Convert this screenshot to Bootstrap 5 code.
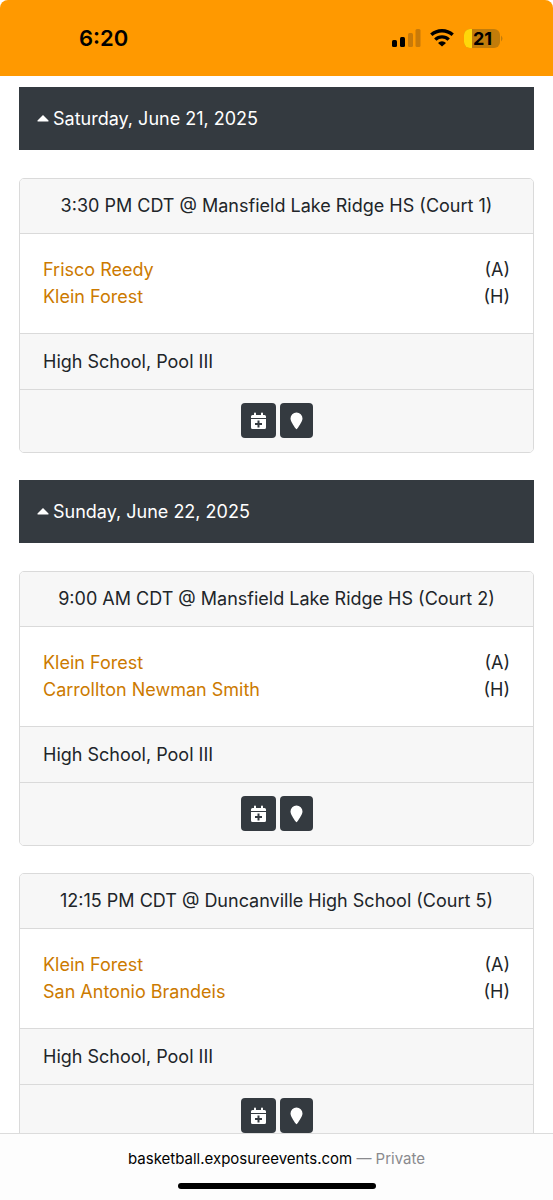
<!DOCTYPE html>
<html lang="en">
<head>
<meta charset="utf-8">
<meta name="viewport" content="width=device-width, initial-scale=1">
<title>Schedule</title>
<link href="https://cdn.jsdelivr.net/npm/bootstrap@5.3.0/dist/css/bootstrap.min.css" rel="stylesheet">
<style>
  body { font-family: Inter, "Liberation Sans", sans-serif; font-size: 18px; line-height: 27px; color: #212529; background: #fff; }
  .status-bar { height: 76px; background: #ff9900; border-radius: 8px 8px 0 0; padding: 0 49px 0 79px; color: #000; }
  .clock { font-size: 22px; font-weight: 600; }
  .schedule { min-height: 0; padding: 11px 19px 0; overflow-y: auto; scrollbar-width: none; }
  .schedule::-webkit-scrollbar { display: none; }
  .day-toggle { padding: 18px; margin-bottom: 28px; background: #343a40; color: #fff; border: 0; font-size: 18px; }
  .game { margin-bottom: 27px; border-color: #dadada; border-radius: 5px; --bs-card-inner-border-radius: 4px; }
  .game .card-header, .game .card-footer { background: #f7f7f7; border-color: #dadada; padding: 14px 23px; color: #212529; }
  .game .card-header { padding-top: 13px; }
  .game .card-footer:last-child { padding-top: 13px; }
  .game .card-body { padding: 22px 23px 23px; }
  .team-link { color: #cc7a00; text-decoration: none; }
  .tool-btn { height: 35px; padding: 0 10px; background: #343a40; border: 0; border-radius: 4px; color: #fff; }
  .address-bar { height: 67px; border-top: 1px solid #dcdcdc; background: #fdfdfd; font-size: 15px; color: #000; padding-top: 11px; }
  .private-tag { color: #8a8a8e; }
  .home-bar { width: 198px; height: 6px; border-radius: 3px; background: #000; margin-top: 11px; }
</style>
</head>
<body class="vh-100 d-flex flex-column overflow-hidden">
<svg class="d-none" aria-hidden="true">
  <symbol id="cal-plus" viewBox="0 0 15 18"><path fill="currentColor" d="M3 1.500a1 1 0 0 1 2 0V3h5V1.500a1 1 0 0 1 2 0V3h1.500A1.500 1.500 0 0 1 15 4.500V6H0V4.500A1.500 1.500 0 0 1 1.500 3H3zM0 7h15v8.500a1.500 1.500 0 0 1-1.500 1.500h-12A1.500 1.500 0 0 1 0 15.500zm6.500 1.500v2.500H4v2h2.500v2.500h2V13H11v-2H8.500V8.500z"/></symbol>
  <symbol id="pin" viewBox="0 0 13 18"><path fill="currentColor" d="M6.500.5a6 6 0 0 1 6 6c0 2.600-3 7-5.200 10.100a1 1 0 0 1-1.600 0C3.500 13.500.5 9.100.5 6.500a6 6 0 0 1 6-6z"/></symbol>
  <symbol id="caret" viewBox="0 0 12 7"><path fill="currentColor" d="M6 0 11.500 5.500Q12 6.500 11 6.500H1Q0 6.500.5 5.500z"/></symbol>
</svg>

<header class="status-bar d-flex flex-shrink-0 align-items-center justify-content-between">
  <span class="clock">6:20</span>
  <span class="d-flex align-items-center">
    <svg class="me-2" width="30" height="20" viewBox="0 0 30 20" role="img" aria-label="Signal"><rect x="0" y="12" width="5" height="7" rx="1.500"/><rect x="8" y="9" width="5" height="10" rx="1.500"/><g fill="#c97a08"><rect x="16" y="5" width="5" height="14" rx="1.500"/><rect x="23.500" y="1" width="5" height="18" rx="1.500"/></g></svg>
    <svg class="me-2" width="26" height="20" viewBox="0 0 26 20" role="img" aria-label="Wi-Fi"><g fill="none" stroke="#000" stroke-width="3.400"><path d="M1.300 6.800a16 16 0 0 1 21.400 0"/><path d="M5.300 11.600a9.600 9.600 0 0 1 13.400 0"/></g><path d="M12 18.500 8 14.900a5.600 5.600 0 0 1 8 0z"/></svg>
    <svg width="40" height="21" viewBox="0 0 40 21" role="img" aria-label="Battery 21 percent"><rect y="1" width="36" height="19" rx="6" fill="#c27c0a"/><path d="M8 1H6a6 6 0 0 0-6 6v7a6 6 0 0 0 6 6h2z" fill="#ffd60a"/><path d="M37 7.500q3 3 0 6z" fill="#c27c0a"/><text x="18.500" y="17" text-anchor="middle" font-size="18" font-weight="700">21</text></svg>
  </span>
</header>

<main class="schedule flex-fill">
  <button class="day-toggle d-flex align-items-center w-100 text-start" type="button" data-bs-toggle="collapse" data-bs-target="#day-1" aria-expanded="true"><svg class="me-1" width="12" height="7"><use href="#caret"/></svg>Saturday, June 21, 2025</button>
  <section id="day-1" class="collapse show">
    <article class="card game">
      <div class="card-header text-center">3:30 PM CDT @ Mansfield Lake Ridge HS (Court 1)</div>
      <div class="card-body">
        <div class="d-flex justify-content-between"><a class="team-link" href="#">Frisco Reedy</a><span>(A)</span></div>
        <div class="d-flex justify-content-between"><a class="team-link" href="#">Klein Forest</a><span>(H)</span></div>
      </div>
      <div class="card-footer">High School, Pool III</div>
      <div class="card-footer d-flex justify-content-center gap-1">
        <button class="tool-btn d-flex align-items-center" type="button" aria-label="Add to calendar"><svg width="15" height="18"><use href="#cal-plus"/></svg></button>
        <button class="tool-btn d-flex align-items-center" type="button" aria-label="Directions"><svg width="13" height="18"><use href="#pin"/></svg></button>
      </div>
    </article>
  </section>

  <button class="day-toggle d-flex align-items-center w-100 text-start" type="button" data-bs-toggle="collapse" data-bs-target="#day-2" aria-expanded="true"><svg class="me-1" width="12" height="7"><use href="#caret"/></svg>Sunday, June 22, 2025</button>
  <section id="day-2" class="collapse show">
    <article class="card game">
      <div class="card-header text-center">9:00 AM CDT @ Mansfield Lake Ridge HS (Court 2)</div>
      <div class="card-body">
        <div class="d-flex justify-content-between"><a class="team-link" href="#">Klein Forest</a><span>(A)</span></div>
        <div class="d-flex justify-content-between"><a class="team-link" href="#">Carrollton Newman Smith</a><span>(H)</span></div>
      </div>
      <div class="card-footer">High School, Pool III</div>
      <div class="card-footer d-flex justify-content-center gap-1">
        <button class="tool-btn d-flex align-items-center" type="button" aria-label="Add to calendar"><svg width="15" height="18"><use href="#cal-plus"/></svg></button>
        <button class="tool-btn d-flex align-items-center" type="button" aria-label="Directions"><svg width="13" height="18"><use href="#pin"/></svg></button>
      </div>
    </article>
    <article class="card game">
      <div class="card-header text-center">12:15 PM CDT @ Duncanville High School (Court 5)</div>
      <div class="card-body">
        <div class="d-flex justify-content-between"><a class="team-link" href="#">Klein Forest</a><span>(A)</span></div>
        <div class="d-flex justify-content-between"><a class="team-link" href="#">San Antonio Brandeis</a><span>(H)</span></div>
      </div>
      <div class="card-footer">High School, Pool III</div>
      <div class="card-footer d-flex justify-content-center gap-1">
        <button class="tool-btn d-flex align-items-center" type="button" aria-label="Add to calendar"><svg width="15" height="18"><use href="#cal-plus"/></svg></button>
        <button class="tool-btn d-flex align-items-center" type="button" aria-label="Directions"><svg width="13" height="18"><use href="#pin"/></svg></button>
      </div>
    </article>
  </section>
</main>

<footer class="address-bar d-flex flex-column flex-shrink-0 align-items-center">
  <div>basketball.exposureevents.com <span class="private-tag">— Private</span></div>
  <div class="home-bar"></div>
</footer>
<script src="https://cdn.jsdelivr.net/npm/bootstrap@5.3.0/dist/js/bootstrap.bundle.min.js"></script>
</body>
</html>
